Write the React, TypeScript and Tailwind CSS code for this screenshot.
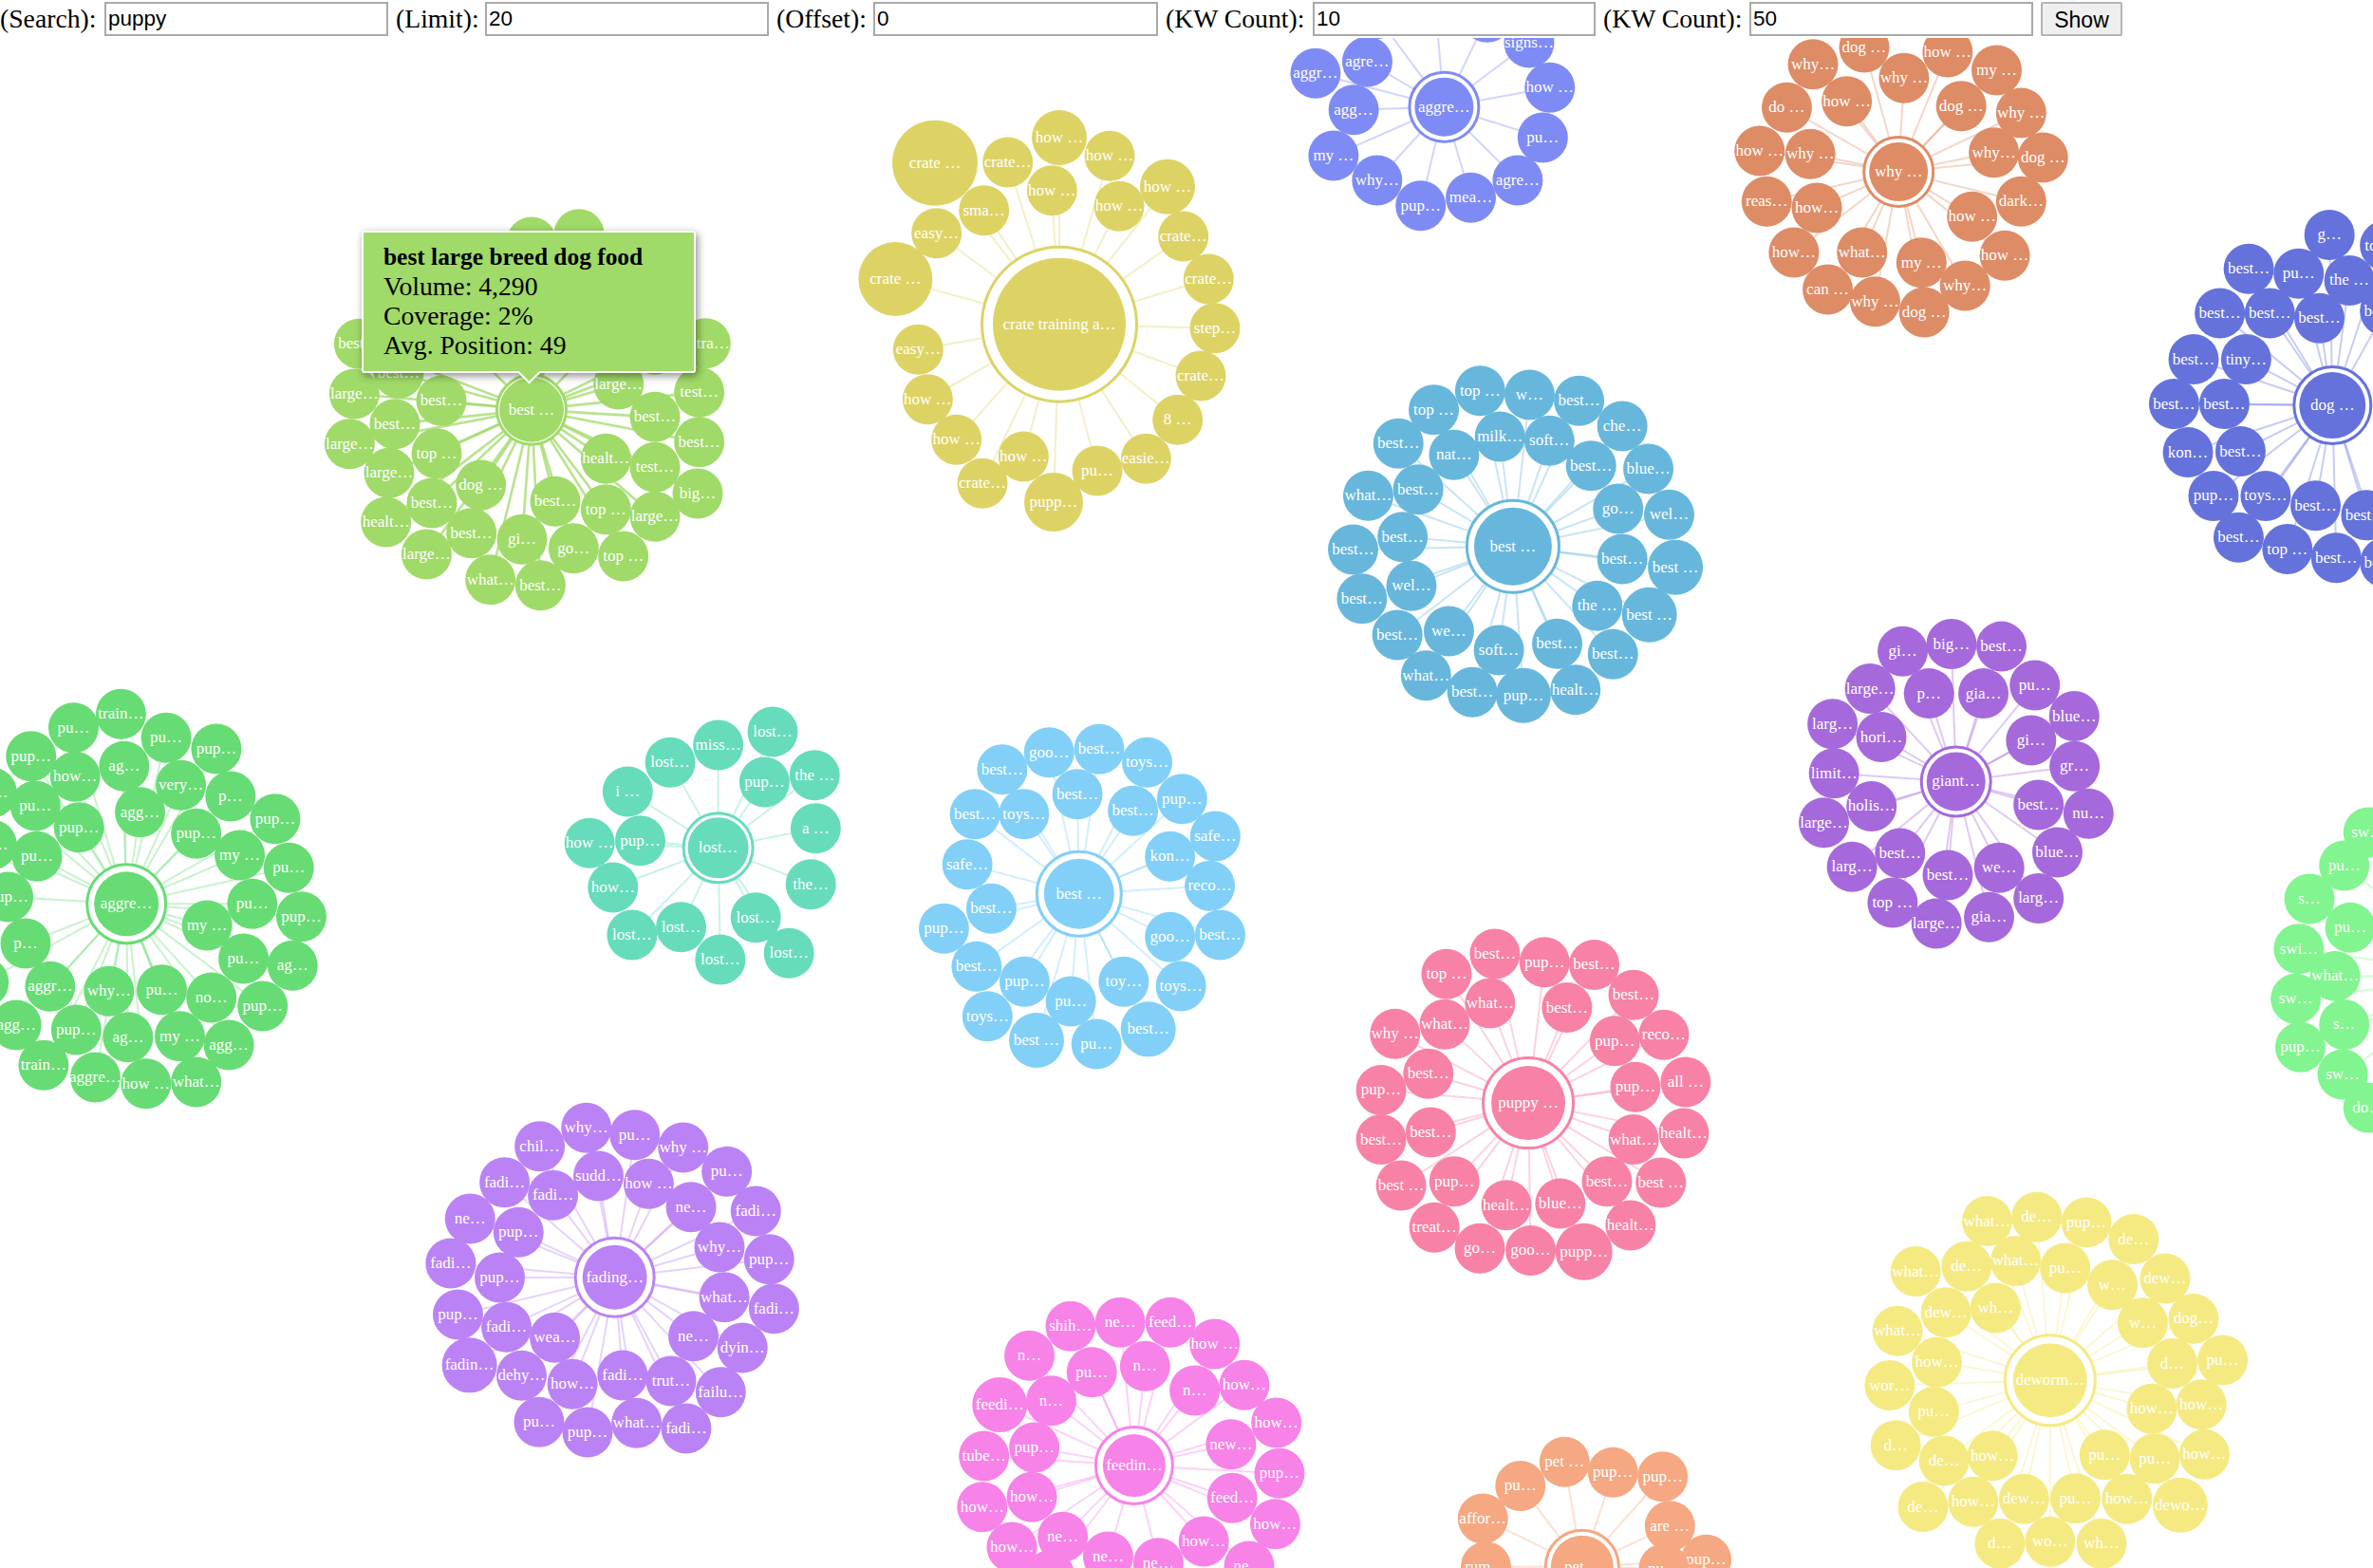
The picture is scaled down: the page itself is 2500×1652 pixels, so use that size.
import React from "react";

type Node = [number, number, string, number?];
type Cluster = {
  color: string;
  sx: number;
  sy: number;
  ox: number;
  oy: number;
  c: [number, number];
  ring: number;
  inner: number;
  label: string;
  strong?: boolean;
  nodes: Node[];
};

const clusters: Cluster[] = [
  {
    color: "#A0DA68", sx: 3, sy: 3, ox: 320, oy: 200, c: [720, 695], ring: 38, inner: 34, label: "best …", strong: true,
    nodes: [
      [870, 140, ""], [720, 165, ""], [850, 300, ""], [600, 320, ""], [980, 430, ""], [450, 430, ""],
      [175, 487, "best"], [1270, 485, "extra"], [300, 580, "best"], [1110, 505, ""],
      [160, 645, "large"], [435, 667, "best"], [288, 740, "best"], [145, 803, "large"], [420, 833, "top "], [270, 895, "large"],
      [560, 933, "dog "], [405, 990, "best"], [260, 1050, "healt"], [530, 1085, "best"], [388, 1152, "large"], [690, 1105, "gi"],
      [853, 1133, "go"], [1010, 1158, "top "], [590, 1232, "what"], [748, 1250, "best"], [795, 985, "best"], [955, 1010, "top "],
      [1110, 1033, "large"], [1245, 960, "big"], [1110, 877, "test"], [955, 850, "healt"], [1250, 797, "best"], [1110, 718, "best"],
      [1250, 640, "test"], [995, 615, "large"],
    ],
  },
  {
    color: "#DDD365", sx: 3, sy: 3, ox: 880, oy: 100, c: [708, 725], ring: 83, inner: 70, label: "crate training a…",
    nodes: [
      [315, 215, "crate ", 45], [545, 213, "crate"], [708, 135, "how ", 29], [867, 193, "how "], [1050, 290, "how ", 29], [685, 302, "how "],
      [897, 352, "how "], [470, 365, "sma"], [320, 437, "easy"], [190, 582, "crate ", 39], [1100, 447, "crate"], [1180, 582, "crate"],
      [1200, 737, "step"], [1155, 888, "crate"], [1082, 1027, "8 "], [982, 1150, "easie"], [828, 1188, "pu"], [690, 1287, "pupp", 31],
      [595, 1143, "how "], [465, 1228, "crate"], [383, 1090, "how "], [292, 962, "how "], [262, 805, "easy"],
    ],
  },
  {
    color: "#7F8BF5", sx: 1.742, sy: 3, ox: 1340, oy: 0, c: [316, 338], ring: 38, inner: 31, label: "aggre…",
    nodes: [
      [190, 45, "pup"], [300, 20, "pup"], [395, 55, "agg"], [80, 232, "aggr"], [175, 195, "agre"], [150, 347, "agg"], [472, 135, "signs"],
      [510, 277, "how "], [497, 435, "pu"], [113, 492, "my "], [193, 570, "why"], [273, 650, "pup"], [365, 625, "mea"], [451, 570, "agre"],
    ],
  },
  {
    color: "#DE8C66", sx: 1.742, sy: 3, ox: 1340, oy: 0, c: [1150, 543], ring: 38, inner: 31, label: "why …",
    nodes: [
      [993, 203, "why"], [1087, 150, "dog "], [1240, 165, "how "], [1330, 222, "my "], [1160, 247, "why "], [1055, 320, "how "], [1265, 335, "dog "],
      [1375, 357, "why "], [945, 340, "do "], [895, 477, "how "], [988, 487, "why "], [1325, 482, "why"], [1415, 498, "dog "], [908, 637, "reas"],
      [1000, 657, "how"], [1375, 637, "dark"], [1285, 685, "how "], [958, 798, "how"], [1083, 798, "what"], [1192, 830, "my "], [1345, 808, "how "],
      [1272, 903, "why"], [1020, 915, "can "], [1107, 953, "why "], [1197, 987, "dog "],
    ],
  },
  {
    color: "#67B7DD", sx: 1.823, sy: 3, ox: 1380, oy: 370, c: [390, 617], ring: 50, inner: 41, label: "best …",
    nodes: [
      [327, 125, "top "], [422, 138, "w"], [517, 157, "best"], [238, 185, "top "], [600, 237, "che"], [365, 270, "milk"], [460, 283, "soft"],
      [170, 292, "best"], [277, 328, "nat"], [540, 362, "best"], [650, 372, "blue"], [208, 437, "best"], [112, 457, "what"], [592, 498, "go"],
      [690, 517, "wel"], [178, 587, "best"], [83, 627, "best"], [600, 657, "best"], [702, 683, "best ", 29], [195, 742, "wel"], [100, 782, "best"],
      [552, 805, "the "], [652, 833, "best ", 29], [168, 897, "best"], [267, 885, "we"], [475, 925, "best"], [363, 945, "soft"], [582, 958, "best"],
      [223, 1025, "what"], [312, 1078, "best"], [410, 1088, "pup", 29], [510, 1070, "healt"],
    ],
  },
  {
    color: "#6572DC", sx: 2.529, sy: 1.96, ox: 1880, oy: 200, c: [1460, 445], ring: 42, inner: 35, label: "dog …",
    nodes: [
      [1452, 93, "g"], [1600, 115, "top "], [1237, 163, "best"], [1370, 173, "pu"], [1505, 187, "the "], [1600, 250, "best"], [1160, 255, "best"],
      [1293, 255, "best"], [1425, 265, "best"], [1090, 350, "best"], [1230, 350, "tiny"], [1038, 442, "best"], [1172, 442, "best"], [1075, 542, "kon"],
      [1215, 540, "best"], [1143, 632, "pup"], [1282, 632, "toys"], [1415, 652, "best"], [1550, 672, "best"], [1210, 718, "best"], [1340, 742, "top "],
      [1470, 760, "best"], [1600, 770, "best"],
    ],
  },
  {
    color: "#A569DC", sx: 2.529, sy: 1.96, ox: 1880, oy: 200, c: [457, 1222], ring: 38, inner: 31, label: "giant…",
    nodes: [
      [315, 953, "gi"], [445, 938, "big"], [578, 943, "best"], [228, 1030, "large"], [385, 1040, "p"], [530, 1040, "gia"], [667, 1023, "pu"],
      [772, 1087, "blue"], [128, 1103, "larg"], [258, 1130, "hori"], [657, 1137, "gi"], [773, 1190, "gr"], [132, 1205, "limit"], [232, 1273, "holis"],
      [677, 1270, "best"], [810, 1288, "nu"], [105, 1307, "large"], [308, 1370, "best"], [180, 1398, "larg"], [727, 1368, "blue"], [435, 1415, "best"],
      [572, 1400, "we"], [288, 1472, "top "], [677, 1463, "larg"], [405, 1515, "large"], [545, 1502, "gia"],
    ],
  },
  {
    color: "#67DC74", sx: 1.742, sy: 3, ox: 0, oy: 720, c: [232, 697], ring: 43, inner: 34, label: "aggre…",
    nodes: [
      [-15, 345, "pu"], [-15, 510, "pu"], [-30, 945, "ag"], [222, 97, "train"], [135, 140, "pu"], [305, 172, "pu"], [397, 207, "pup"], [57, 230, "pup"],
      [228, 262, "ag"], [138, 295, "how"], [332, 322, "very"], [423, 357, "p"], [65, 387, "pu"], [257, 407, "agg"], [505, 428, "pup"], [145, 455, "pup"],
      [360, 475, "pup"], [68, 547, "pu"], [440, 543, "my "], [530, 583, "pu"], [15, 675, "pup"], [463, 697, "pu"], [553, 737, "pup"], [380, 765, "my "],
      [47, 822, "p"], [447, 870, "pu"], [537, 892, "ag"], [92, 958, "aggr"], [200, 973, "why"], [297, 968, "pu"], [388, 993, "no"], [482, 1020, "pup"],
      [30, 1080, "agg"], [140, 1095, "pup"], [235, 1118, "ag"], [330, 1115, "my "], [420, 1143, "agg"], [80, 1207, "train"], [175, 1245, "aggre"],
      [268, 1265, "how "], [360, 1260, "what"],
    ],
  },
  {
    color: "#66DCBB", sx: 1.742, sy: 3, ox: 0, oy: 720, c: [1318, 520], ring: 38, inner: 32, label: "lost…",
    nodes: [
      [1418, 153, "lost"], [1318, 195, "miss"], [1230, 250, "lost"], [1403, 312, "pup"], [1495, 290, "the "], [1152, 342, "i "], [1497, 458, "a "],
      [1082, 505, "how "], [1175, 497, "pup"], [1125, 645, "how"], [1488, 635, "the"], [1387, 740, "lost"], [1250, 770, "lost"], [1160, 795, "lost"],
      [1448, 853, "lost"], [1322, 873, "lost"],
    ],
  },
  {
    color: "#82D0F7", sx: 1.742, sy: 3, ox: 960, oy: 740, c: [308, 605], ring: 46, inner: 37, label: "best …",
    nodes: [
      [253, 158, "goo"], [345, 148, "best"], [433, 190, "toys"], [167, 212, "best"], [305, 290, "best"], [497, 305, "pup"], [407, 343, "best"],
      [207, 353, "toys"], [117, 353, "best"], [558, 423, "safe"], [475, 487, "kon"], [103, 512, "safe"], [548, 580, "reco"], [147, 652, "best"],
      [60, 715, "pup"], [475, 742, "goo"], [567, 735, "best"], [120, 835, "best"], [208, 883, "pup"], [390, 883, "toy"], [495, 897, "toys"], [293, 945, "pu"],
      [140, 992, "toys"], [435, 1033, "best", 29], [230, 1068, "best ", 29], [340, 1080, "pu"],
    ],
  },
  {
    color: "#F782A5", sx: 1.568, sy: 2.266, ox: 1420, oy: 960, c: [298, 458], ring: 49, inner: 39, label: "puppy …",
    nodes: [
      [243, 102, "best"], [325, 122, "pup"], [407, 128, "best"], [163, 150, "top "], [235, 220, "what"], [472, 200, "best"], [362, 230, "best"],
      [160, 270, "what"], [522, 295, "reco"], [78, 293, "why "], [441, 310, "pup"], [133, 388, "best"], [55, 427, "pup"], [558, 408, "all "], [475, 420, "pup"],
      [137, 528, "best"], [472, 545, "what"], [555, 530, "healt"], [55, 545, "best"], [88, 655, "best "], [176, 645, "pup"], [428, 645, "best"], [517, 648, "best "],
      [262, 702, "healt"], [351, 698, "blue"], [467, 750, "healt"], [143, 755, "treat"], [218, 805, "go"], [302, 810, "goo"], [390, 813, "pupp", 30],
    ],
  },
  {
    color: "#BB82F5", sx: 1.568, sy: 3, ox: 420, oy: 1140, c: [357, 617], ring: 43, inner: 34, label: "fading…",
    nodes: [
      [310, 145, "why"], [390, 167, "pu"], [233, 203, "chil"], [470, 207, "why "], [542, 283, "pu"], [330, 297, "sudd"], [413, 322, "how "], [175, 317, "fadi"],
      [255, 358, "fadi"], [483, 395, "ne"], [590, 408, "fadi"], [118, 432, "ne"], [198, 475, "pup"], [530, 522, "why"], [612, 560, "pup"], [86, 573, "fadi"],
      [167, 618, "pup"], [538, 680, "what"], [620, 716, "fadi"], [98, 735, "pup"], [178, 775, "fadi"], [258, 808, "wea"], [487, 803, "ne"], [568, 840, "dyin"],
      [117, 895, "fadin", 29], [203, 928, "dehy"], [287, 955, "how"], [370, 927, "fadi"], [450, 945, "trut"], [532, 980, "failu"], [232, 1075, "pu"],
      [312, 1107, "pup"], [393, 1078, "what"], [475, 1095, "fadi"],
    ],
  },
  {
    color: "#F782E8", sx: 1.568, sy: 3, ox: 420, oy: 1140, c: [1215, 1212], ring: 42, inner: 33, label: "feedin…",
    nodes: [
      [1110, 772, "shih"], [1192, 760, "ne"], [1275, 760, "feed"], [1348, 828, "how "], [1042, 865, "n"], [1145, 917, "pu"], [1233, 898, "n"], [1315, 975, "n"],
      [1397, 958, "how"], [993, 1020, "feedi", 29], [1078, 1007, "n"], [1450, 1077, "how"], [1375, 1145, "new"], [1050, 1155, "pup"], [967, 1182, "tube"],
      [1455, 1237, "pup"], [1046, 1312, "how"], [1377, 1315, "feed"], [964, 1343, "how"], [1448, 1397, "how"], [1097, 1438, "ne"], [1330, 1452, "how"],
      [1013, 1470, "how"], [1172, 1500, "ne"], [1255, 1520, "ne"], [1405, 1530, "ne"], [1075, 1560, "ne"],
    ],
  },
  {
    color: "#F5EA82", sx: 1.568, sy: 2.266, ox: 1420, oy: 960, c: [1160, 1120], ring: 49, inner: 39, label: "deworm…",
    nodes: [
      [1138, 730, "de"], [1056, 740, "what"], [1220, 743, "pup"], [1298, 783, "de"], [1103, 835, "what"], [1185, 852, "pu"], [1022, 848, "de"], [938, 860, "what"],
      [1350, 877, "dew"], [1263, 892, "w"], [1070, 947, "wh"], [988, 958, "dew"], [1313, 983, "w"], [1397, 973, "dog"], [908, 1002, "what"], [973, 1077, "how"],
      [1445, 1072, "pu"], [1362, 1080, "d"], [895, 1132, "wor"], [968, 1195, "pu"], [1328, 1188, "how"], [1410, 1178, "how"], [905, 1275, "d"], [1065, 1300, "how"],
      [1250, 1298, "pu"], [985, 1312, "de"], [1333, 1307, "pu"], [1415, 1297, "how"], [950, 1422, "de"], [1033, 1410, "how"], [1117, 1403, "dew"], [1202, 1402, "pu"],
      [1287, 1403, "how"], [1375, 1418, "dewo", 29], [1077, 1510, "d"], [1160, 1505, "wo"], [1245, 1510, "wh"],
    ],
  },
  {
    color: "#F5A882", sx: 1.568, sy: 2.266, ox: 1420, oy: 960, c: [387, 1565], ring: 40, inner: 33, label: "pet…",
    nodes: [
      [358, 1315, "pet "], [438, 1340, "pup"], [520, 1350, "pup"], [285, 1372, "pu"], [223, 1450, "affor"], [532, 1468, "are "], [592, 1548, "pup"],
      [228, 1565, "rum"], [522, 1570, "pu"],
    ],
  },
  {
    color: "#82F590", sx: 0.6272, sy: 0.6272, ox: 0, oy: 0, c: [1640, 645], ring: 40, inner: 32, label: "swim…",
    nodes: [
      [1565, 550, "sw"], [1549, 572, "pu"], [1526, 594, "s"], [1553, 613, "pu"], [1519, 627, "swi"], [1543, 645, "what"], [1517, 660, "sw"],
      [1549, 677, "s"], [1520, 692, "pup"], [1548, 710, "sw"], [1565, 732, "do"],
    ],
  },
];

const serif = "font-['Liberation_Serif','Times_New_Roman',serif]";
const sans = "font-['Liberation_Sans',Arial,sans-serif]";

function Field({ label, value, labelW, inputW }: { label: string; value: string; labelW: string; inputW: string }) {
  return (
    <>
      <span className={`${labelW} shrink-0 text-[27.7px] leading-[36px] text-black ${serif}`}>{label}</span>
      <input
        readOnly
        value={value}
        className={`${inputW} h-[36px] shrink-0 border-2 border-[#a9a9a9] bg-white px-[2px] text-[22.5px] text-black outline-none ${sans}`}
      />
    </>
  );
}

function ClusterView({ cl }: { cl: Cluster }) {
  const map = (x: number, y: number): [number, number] => [x / cl.sx + cl.ox, y / cl.sy + cl.oy];
  const [cx, cy] = map(cl.c[0], cl.c[1]);
  return (
    <g>
      {cl.nodes.map((n, i) => {
        const [x, y] = map(n[0], n[1]);
        return (
          <line key={i} x1={cx} y1={cy} x2={x} y2={y} stroke={cl.color} strokeWidth={cl.strong ? 2.6 : 2} strokeOpacity={cl.strong ? 0.75 : 0.36} />
        );
      })}
      <circle cx={cx} cy={cy} r={cl.ring - 1.5} fill="#fff" stroke={cl.color} strokeWidth={3} />
      <circle cx={cx} cy={cy} r={cl.inner} fill={cl.color} />
      <text x={cx} y={cy + 5} textAnchor="middle" fontSize={17} fill="#fff">
        {cl.label}
      </text>
      {cl.nodes.map((n, i) => {
        const [x, y] = map(n[0], n[1]);
        return (
          <g key={i}>
            <circle cx={x} cy={y} r={n[3] ?? 26.5} fill={cl.color} />
            {n[2] ? (
              <text x={x} y={y + 5} textAnchor="middle" fontSize={17} fill="#fff">
                {n[2] + "…"}
              </text>
            ) : null}
          </g>
        );
      })}
    </g>
  );
}

export default function App() {
  return (
    <div className={`relative h-[1652px] w-[2500px] overflow-hidden bg-white ${serif}`}>
      <form className="flex h-[40px] items-start pt-[2px]">
        <Field label="(Search):" value="puppy" labelW="w-[110px]" inputW="w-[299px]" />
        <Field label="(Limit):" value="20" labelW="w-[102px] pl-[8px]" inputW="w-[299px]" />
        <Field label="(Offset):" value="0" labelW="w-[110px] pl-[8px]" inputW="w-[300px]" />
        <Field label="(KW Count):" value="10" labelW="w-[163px] pl-[8px]" inputW="w-[298px]" />
        <Field label="(KW Count):" value="50" labelW="w-[162px] pl-[8px]" inputW="w-[299px]" />
        <button type="button" className={`ml-[8px] h-[36px] w-[86px] shrink-0 rounded-[2px] border-2 border-[#b4b4b4] bg-[#efefef] text-[23px] text-black ${sans}`}>
          Show
        </button>
      </form>
      <svg className="block" width={2500} height={1612} viewBox="0 40 2500 1612" fontFamily="'Liberation Serif','Times New Roman',serif">
        {clusters.map((cl, i) => (
          <ClusterView key={i} cl={cl} />
        ))}
      </svg>
      <div className="absolute left-[381px] top-[243px] h-[150px] w-[352px] rounded-[3px] border-2 border-white bg-[#A0DA68] pl-[21px] pt-[10px] text-[27.7px] leading-[31px] text-black shadow-[2px_3px_8px_rgba(0,0,0,0.45)]">
        <div className="text-[25.4px] font-bold">best large breed dog food</div>
        <div>Volume: 4,290</div>
        <div>Coverage: 2%</div>
        <div>Avg. Position: 49</div>
        <div className="absolute bottom-[-10px] left-[166px] size-[17px] rotate-45 border-b-2 border-r-2 border-white bg-[#A0DA68]" />
      </div>
    </div>
  );
}
